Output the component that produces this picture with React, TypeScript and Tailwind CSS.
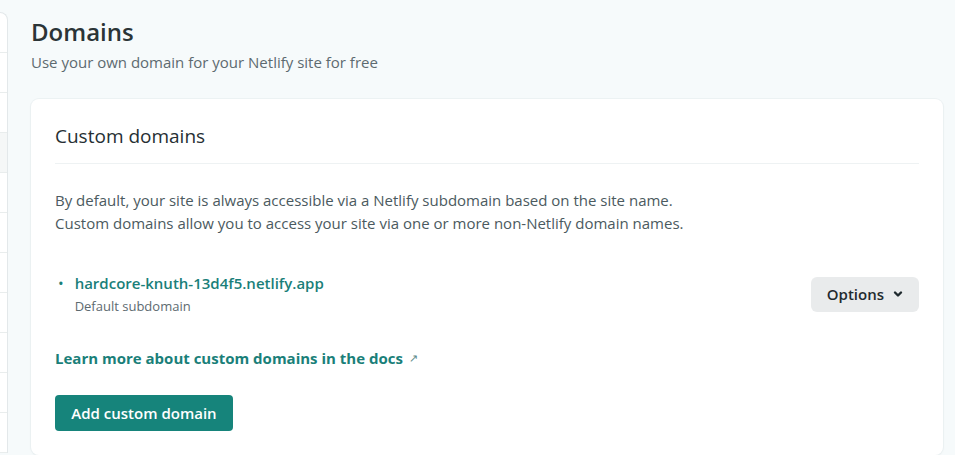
import React from 'react';

const FONT = { fontFamily: '"Segoe UI", "Open Sans", "Noto Sans", sans-serif' };

function SidebarStub() {
  const rows = Array.from({ length: 11 });
  return (
    <aside className="w-[8px] shrink-0 mt-[12px] self-start bg-white border-t border-r border-[#e3e8ea] rounded-tr-lg overflow-hidden">
      {rows.map((_, i) => (
        <div
          key={i}
          className={`h-[40px] border-b border-[#e9eded] ${i === 3 ? 'bg-[#f5f7f7]' : ''}`}
        />
      ))}
    </aside>
  );
}

export default function App() {
  return (
    <div className="min-h-screen bg-[#f6fafb] flex text-[#2c3a40]" style={FONT}>
      <SidebarStub />
      <main className="flex-1 pl-[23px] pr-[12px] pt-[15px]">
        <h1 className="text-[24px] leading-[34px] font-semibold text-[#2b3437]">Domains</h1>
        <p className="text-[15px] leading-[22px] text-[#5d6a70] mt-[2px]">
          Use your own domain for your Netlify site for free
        </p>

        <section className="mt-[26px] bg-white rounded-lg shadow-[0_0_0_1px_rgba(230,236,238,0.6),0_1px_3px_rgba(0,0,0,0.04)] px-[24px] pt-[23px] pb-[24px]">
          <h2 className="text-[19px] leading-[28px] font-medium text-[#262f33] pb-[13px] border-b border-[#eef2f3]">
            Custom domains
          </h2>

          <div className="mt-[25px] text-[15px] leading-[23px] text-[#4b5a60]">
            <p>By default, your site is always accessible via a Netlify subdomain based on the site name.</p>
            <p>Custom domains allow you to access your site via one or more non-Netlify domain names.</p>
          </div>

          <div className="mt-[37px] flex items-center justify-between">
            <ul>
              <li className="flex gap-[11px]">
                <span className="text-[#1a7f79] text-[15px] leading-[22px] pl-[3px]">•</span>
                <div>
                  <a className="block text-[15px] leading-[22px] font-semibold text-[#1a7f79]" href="#">
                    hardcore-knuth-13d4f5.netlify.app
                  </a>
                  <span className="block text-[13px] leading-[20px] text-[#5d6a70] mt-[2px]">Default subdomain</span>
                </div>
              </li>
            </ul>
            <button
              type="button"
              className="h-[35px] px-[16px] rounded-md bg-[#e9ebec] text-[15px] font-semibold text-[#1f2a2e] flex items-center gap-[9px]"
            >
              Options
              <svg width="10" height="8" viewBox="0 0 10 8" fill="none">
                <path d="M2 2.5l3 3 3-3" stroke="#1f2a2e" strokeWidth="2.4" strokeLinecap="round" strokeLinejoin="round" />
              </svg>
            </button>
          </div>

          <a href="#" className="mt-[31px] inline-flex items-center gap-[6px] text-[15px] leading-[22px] font-bold text-[#1a7f79]">
            Learn more about custom domains in the docs
            <span className="text-[11px] font-normal text-[#5d8a88]">↗</span>
          </a>

          <div className="mt-[25px]">
            <button
              type="button"
              className="h-[36px] px-[16px] min-w-[178px] rounded bg-[#16847b] text-white text-[15px] font-semibold"
            >
              Add custom domain
            </button>
          </div>
        </section>
      </main>
    </div>
  );
}
